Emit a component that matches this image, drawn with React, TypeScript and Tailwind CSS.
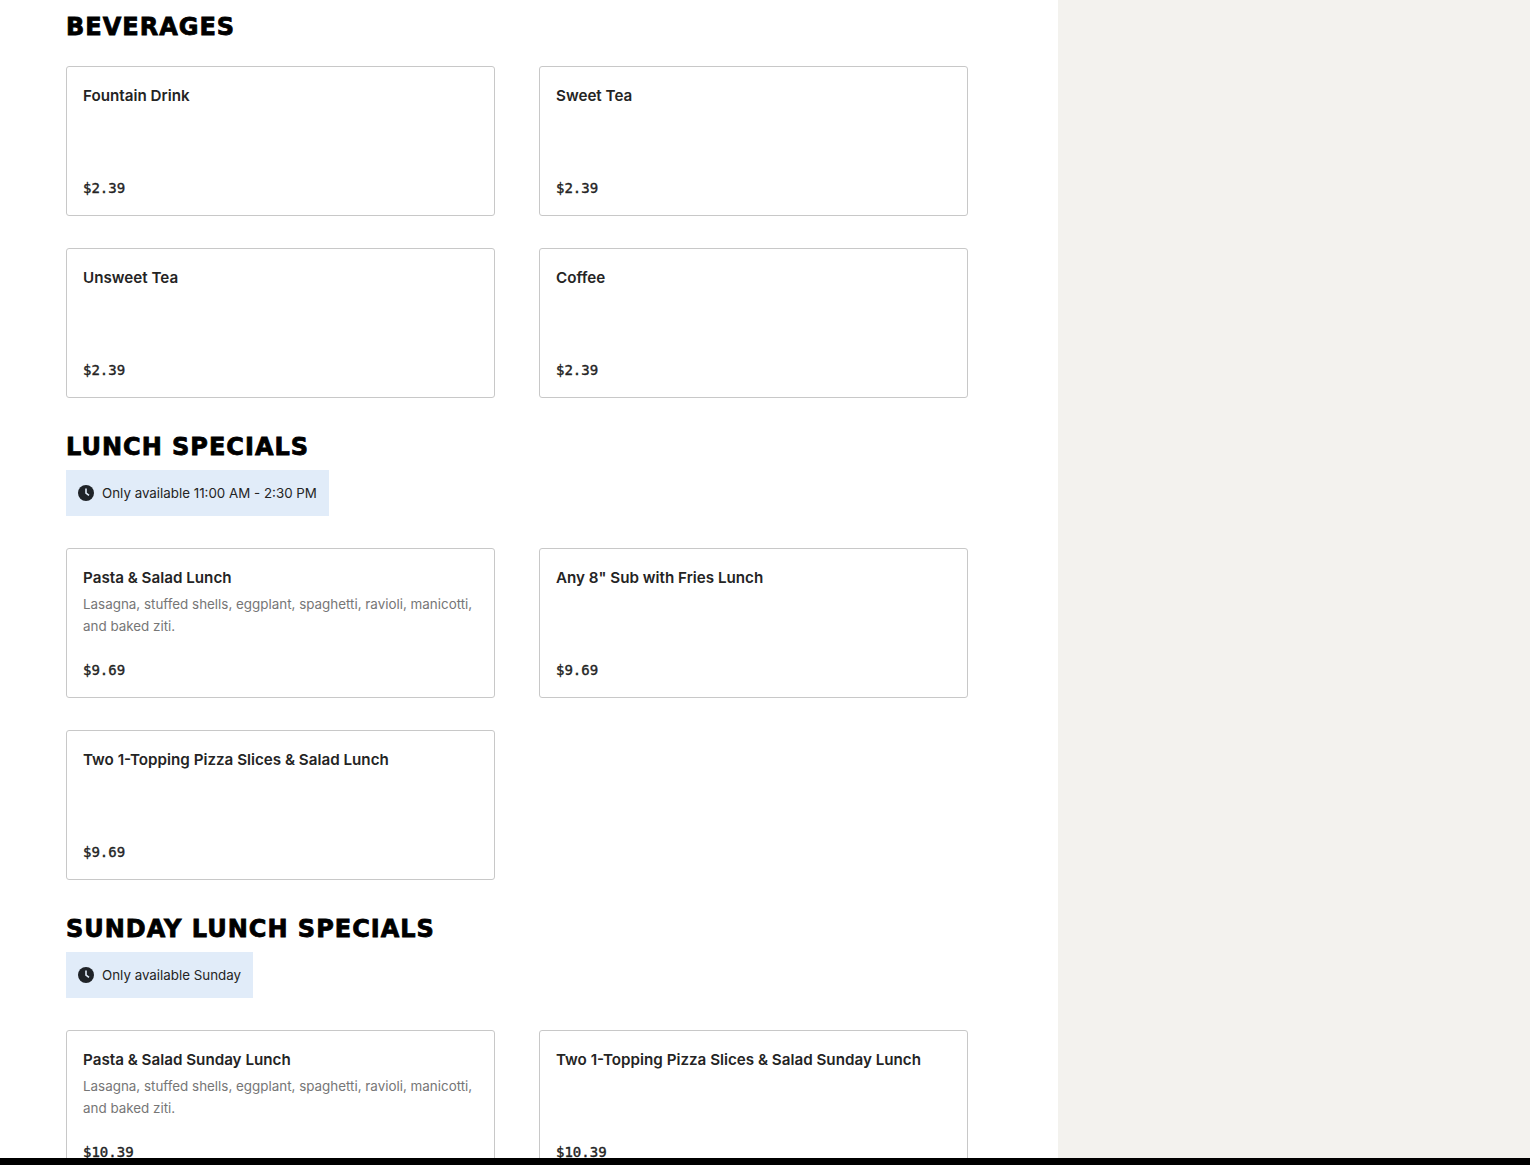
const sans = "font-['Inter','Liberation_Sans',sans-serif]";

function Clock() {
  return (
    <svg viewBox="0 0 16 16" className="w-4 h-4 shrink-0 mr-2">
      <circle cx="8" cy="8" r="8" fill="#1f2328" />
      <path d="M8 3.5V8l3 2.4" fill="none" stroke="#e1ecf9" strokeWidth="1.6" />
    </svg>
  );
}

function Item({ name, desc, price }: { name: string; desc?: string; price: string }) {
  return (
    <div className="h-[150px] bg-white border border-[#c8c8c8] rounded-[3px] px-4 pt-[19px] pb-[17px] flex flex-col">
      <div className="text-[15.2px] leading-[20px] font-semibold text-[#242424]">{name}</div>
      {desc && <div className="mt-[5px] text-[13.4px] leading-[22px] text-[#767676]">{desc}</div>}
      <div className="mt-auto font-['DejaVu_Sans_Mono',monospace] font-normal text-[14px] leading-[20px] text-[#242424] [-webkit-text-stroke:0.4px_#242424]">{price}</div>
    </div>
  );
}

function Heading({ children }: { children: string }) {
  return <h2 className="pt-[2px] text-[24px] leading-[30px] tracking-[1px] font-bold text-black font-['DejaVu_Sans',sans-serif] [-webkit-text-stroke:0.8px_black]">{children}</h2>;
}

function Notice({ children }: { children: string }) {
  return (
    <div className="mt-2 flex items-center self-start w-fit h-[46px] px-3 bg-[#e1ecf9] text-[13.35px] text-[#242424]">
      <Clock />
      {children}
    </div>
  );
}

const pastaDesc = "Lasagna, stuffed shells, eggplant, spaghetti, ravioli, manicotti, and baked ziti.";

export default function App() {
  return (
    <div className={`${sans} h-[1165px] overflow-hidden flex flex-col`}>
      <div className="flex flex-1 min-h-0">
        <main className="w-[1058px] bg-white pl-[66px] pr-[90px] pt-[10px]">
          <Heading>BEVERAGES</Heading>
          <div className="mt-[24px] grid grid-cols-2 gap-x-[44px] gap-y-[32px]">
            <Item name="Fountain Drink" price="$2.39" />
            <Item name="Sweet Tea" price="$2.39" />
            <Item name="Unsweet Tea" price="$2.39" />
            <Item name="Coffee" price="$2.39" />
          </div>
          <div className="mt-[32px]"><Heading>LUNCH SPECIALS</Heading></div>
          <Notice>Only available 11:00 AM - 2:30 PM</Notice>
          <div className="mt-[32px] grid grid-cols-2 gap-x-[44px] gap-y-[32px]">
            <Item name="Pasta & Salad Lunch" desc={pastaDesc} price="$9.69" />
            <Item name='Any 8" Sub with Fries Lunch' price="$9.69" />
            <Item name="Two 1-Topping Pizza Slices & Salad Lunch" price="$9.69" />
          </div>
          <div className="mt-[32px]"><Heading>SUNDAY LUNCH SPECIALS</Heading></div>
          <Notice>Only available Sunday</Notice>
          <div className="mt-[32px] grid grid-cols-2 gap-x-[44px] gap-y-[32px]">
            <Item name="Pasta & Salad Sunday Lunch" desc={pastaDesc} price="$10.39" />
            <Item name="Two 1-Topping Pizza Slices & Salad Sunday Lunch" price="$10.39" />
          </div>
        </main>
        <aside className="flex-1 bg-[#f3f2ee]" />
      </div>
      <div className="h-[7px] bg-black shrink-0 relative z-10" />
    </div>
  );
}
